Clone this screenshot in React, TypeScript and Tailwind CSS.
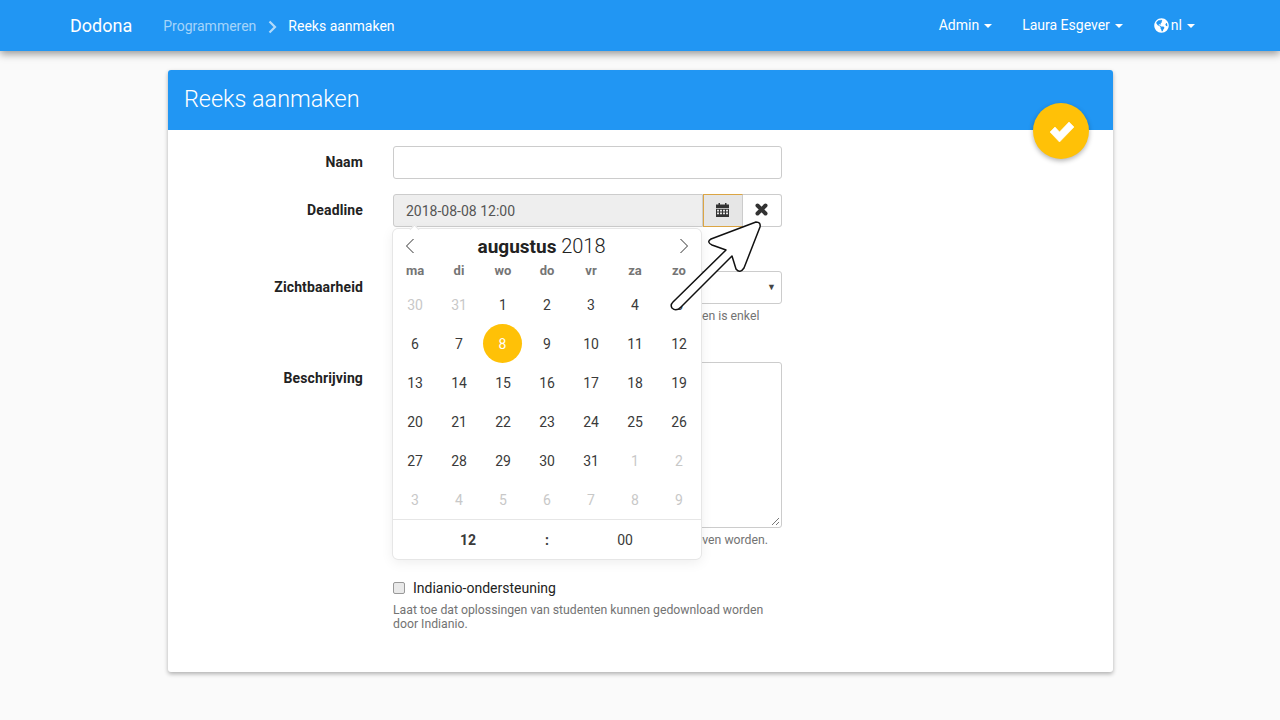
import React from "react";
import { FaGlobeAmericas } from "react-icons/fa";

const Caret = () => (
  <span className="ml-[5px] inline-block w-0 h-0 border-x-[4px] border-x-transparent border-t-[4px] border-t-white align-middle" />
);

const weeks: [string, boolean][][] = [
  [["30", true], ["31", true], ["1", false], ["2", false], ["3", false], ["4", false], ["5", false]],
  [["6", false], ["7", false], ["8", false], ["9", false], ["10", false], ["11", false], ["12", false]],
  [["13", false], ["14", false], ["15", false], ["16", false], ["17", false], ["18", false], ["19", false]],
  [["20", false], ["21", false], ["22", false], ["23", false], ["24", false], ["25", false], ["26", false]],
  [["27", false], ["28", false], ["29", false], ["30", false], ["31", false], ["1", true], ["2", true]],
  [["3", true], ["4", true], ["5", true], ["6", true], ["7", true], ["8", true], ["9", true]],
];

function Calendar() {
  return (
    <div className="absolute left-0 top-[35px] z-10 w-[308px] h-[330px] bg-white rounded-[5px] shadow-[1px_0_0_#e6e6e6,-1px_0_0_#e6e6e6,0_1px_0_#e6e6e6,0_-1px_0_#e6e6e6,0_3px_13px_rgba(0,0,0,0.08)]">
      <div className="absolute left-[18px] -top-[3px] w-[7px] h-[7px] bg-white rotate-45 border-l border-t border-[#e6e6e6]" />
      <div className="relative flex items-center justify-between h-[32px] pt-[2px] px-[12px] text-[#222]">
        <svg width="10" height="16" viewBox="0 0 10 16" fill="none" stroke="#333" strokeWidth="1">
          <path d="M8.5 1 L1.5 8 L8.5 15" />
        </svg>
        <div className="text-[19px] leading-[32px] pt-[1px] pr-[11px]">
          <span className="font-bold">augustus</span> <span className="font-light text-[20px]">2018</span>
        </div>
        <svg width="10" height="16" viewBox="0 0 10 16" fill="none" stroke="#333" strokeWidth="1">
          <path d="M1.5 1 L8.5 8 L1.5 15" />
        </svg>
      </div>
      <div className="grid grid-cols-[repeat(7,44px)] h-[20px] leading-[20px] text-[13px] font-bold text-[#757575] text-center">
        {["ma", "di", "wo", "do", "vr", "za", "zo"].map((d) => (
          <div key={d}>{d}</div>
        ))}
      </div>
      <div className="grid grid-cols-[repeat(7,44px)] mt-[4px]">
        {weeks.flat().map(([d, muted], i) => (
          <div key={i} className="h-[39px] flex items-center justify-center text-[14px]">
            {d === "8" && !muted ? (
              <span className="w-[39px] h-[39px] -ml-[1px] pt-[1px] rounded-full bg-[#ffc107] text-white flex items-center justify-center">{d}</span>
            ) : (
              <span className={muted ? "pt-[1px] text-[#c8c8c8]" : "pt-[1px] text-[#3a3a3a]"}>{d}</span>
            )}
          </div>
        ))}
      </div>
      <div className="flex items-center h-[40px] pt-[1px] border-t border-[#e6e6e6] text-[14px] text-[#3a3a3a]">
        <div className="w-[150px] text-center font-bold">12</div>
        <div className="w-[8px] text-center font-bold">:</div>
        <div className="w-[150px] text-center -ml-[1px]">00</div>
      </div>
    </div>
  );
}

const Arrow = () => (
  <svg className="absolute left-[660px] top-[210px] z-20" width="110" height="110" viewBox="660 210 110 110" fill="none">
    <path
      d="M756 222 Q761 222 760 227 L744 268 Q740 274 736 269 L732 256 L681 307 Q676 312 672 308 Q670 305 673 302 L726 250 L712 245 Q706 242 711 239 Z"
      fill="white"
      stroke="#111"
      strokeWidth="1.5"
      strokeLinejoin="round"
    />
  </svg>
);

const labelCls = "text-right font-bold text-[14px] tracking-[0.13px] text-[#222] pt-[6px] leading-[20px]";
const helpCls = "text-[12.25px] leading-[14px] text-[#737373]";
const fieldCls = "border border-[#ccc] rounded-[3px] bg-white";

export default function App() {
  return (
    <div className="relative min-h-[720px] bg-[#fafafa] font-['Roboto',sans-serif] text-[14px] overflow-hidden">
      <nav className="h-[51px] bg-[#2196f3] shadow-[0_3px_8px_rgba(0,0,0,0.4)] flex items-center text-white pl-[70px] pr-[85px]">
        <span className="text-[18px] mr-[31px]">Dodona</span>
        <span className="text-white/60 pt-[1px]">Programmeren</span>
        <svg className="mx-[10px] mt-[2px]" width="12" height="14" viewBox="0 0 12 14" fill="none" stroke="white" strokeOpacity="0.65" strokeWidth="2.2">
          <path d="M3.5 1.5 L9 7 L3.5 12.5" />
        </svg>
        <span className="pt-[1px]">Reeks aanmaken</span>
        <div className="ml-auto flex items-center">
          <span>Admin<Caret /></span>
          <span className="ml-[30px]">Laura Esgever<Caret /></span>
          <span className="ml-[31px] flex items-center">
            <FaGlobeAmericas className="text-[15px] mr-[2px]" />nl<Caret />
          </span>
        </div>
      </nav>

      <main className="relative ml-[168px] mt-[19px] w-[945px] h-[602px] bg-white rounded-[3px] shadow-[0_2px_4px_rgba(0,0,0,0.3)]">
        <div className="h-[60px] bg-[#2196f3] rounded-t-[3px] flex items-center px-[16px] text-white text-[23.4px] font-light">
          Reeks aanmaken
        </div>
        <button className="absolute right-[24px] top-[33px] z-10 w-[56px] h-[56px] rounded-full bg-[#ffc107] text-white flex items-center justify-center shadow-[0_2px_5px_rgba(0,0,0,0.3)]">
          <svg className="mt-[1px] mr-[-1px]" width="26" height="22" viewBox="0 0 26 22" fill="white" stroke="white" strokeWidth="0.6" strokeLinejoin="round">
            <path d="M1 11 L6 6 L10.5 11 L20 1 L25 6 L10.5 21 Z" />
          </svg>
        </button>

        <form className="grid grid-cols-[195px_389px] gap-x-[30px] pt-[16px]">
          <div className={labelCls}>Naam</div>
          <div className={`${fieldCls} h-[33px] mb-[15px]`} />

          <div className={labelCls}>Deadline</div>
          <div className="relative h-[33px] mb-[44px] flex">
            <div className="flex-1 flex items-center px-[12px] pt-[1px] bg-[#eee] border border-[#ccc] rounded-l-[3px] text-[#555]">
              2018-08-08 12:00
            </div>
            <div className="w-[40px] flex items-center justify-center pb-[2px] pr-[1px] bg-[#e6e6e6] border border-[#dba544] border-r-[#ccc] text-[#333]">
              <svg width="13" height="14" viewBox="0 0 13 14" fill="#333">
                <path d="M0 1.5 H2.5 V0 H4 V1.5 H9 V0 H10.5 V1.5 H13 V5 H0 Z" />
                <path d="M0 5.8 H13 V14 H0 Z M1 6.8 V8.6 H3 V6.8 Z M4 6.8 V8.6 H6 V6.8 Z M7 6.8 V8.6 H9 V6.8 Z M10 6.8 V8.6 H12 V6.8 Z M1 9.6 V11.2 H3 V9.6 Z M4 9.6 V11.2 H6 V9.6 Z M7 9.6 V11.2 H9 V9.6 Z M10 9.6 V11.2 H12 V9.6 Z" fillRule="evenodd" />
              </svg>
            </div>
            <div className="w-[39px] flex items-center justify-center pb-[2px] pr-[1px] bg-white border border-l-0 border-[#ccc] rounded-r-[3px]">
              <svg width="13" height="13" viewBox="0 0 13 13" stroke="#333" strokeWidth="4" strokeLinecap="round">
                <path d="M2.5 2.5 L10.5 10.5 M10.5 2.5 L2.5 10.5" />
              </svg>
            </div>
            <Calendar />
          </div>

          <div className={labelCls}>Zichtbaarheid</div>
          <div className="mb-[25px]">
            <div className={`${fieldCls} h-[33px] flex items-center justify-end pr-[5px] text-[9px] text-[#444]`}>▼</div>
            <p className={`${helpCls} mt-[5px]`}>
              Het bekijken of oplossen van opgaven in verborgen reeksen is enkel mogelijk via een rechtstreekse link.
            </p>
          </div>

          <div className={labelCls}>Beschrijving</div>
          <div className="mb-[31px]">
            <div className={`${fieldCls} relative h-[166px]`}>
              <svg className="absolute right-[1px] bottom-[1px]" width="9" height="9" viewBox="0 0 9 9" stroke="#777" strokeWidth="1">
                <path d="M1 8 L8 1 M5 8 L8 5" />
              </svg>
            </div>
            <p className={`${helpCls} mt-[5px]`}>De beschrijving van deze reeks kan in markdown geschreven worden.</p>
          </div>

          <div />
          <div>
            <label className="flex items-center text-[14px] text-[#222] h-[20px]">
              <span className="w-[12px] h-[12px] rounded-[2px] border border-[#999] bg-[#e9e9e9] mr-[8px]" />
              Indianio-ondersteuning
            </label>
            <p className={`${helpCls} mt-[5px]`}>
              Laat toe dat oplossingen van studenten kunnen gedownload worden door Indianio.
            </p>
          </div>
        </form>
      </main>
      <Arrow />
    </div>
  );
}
